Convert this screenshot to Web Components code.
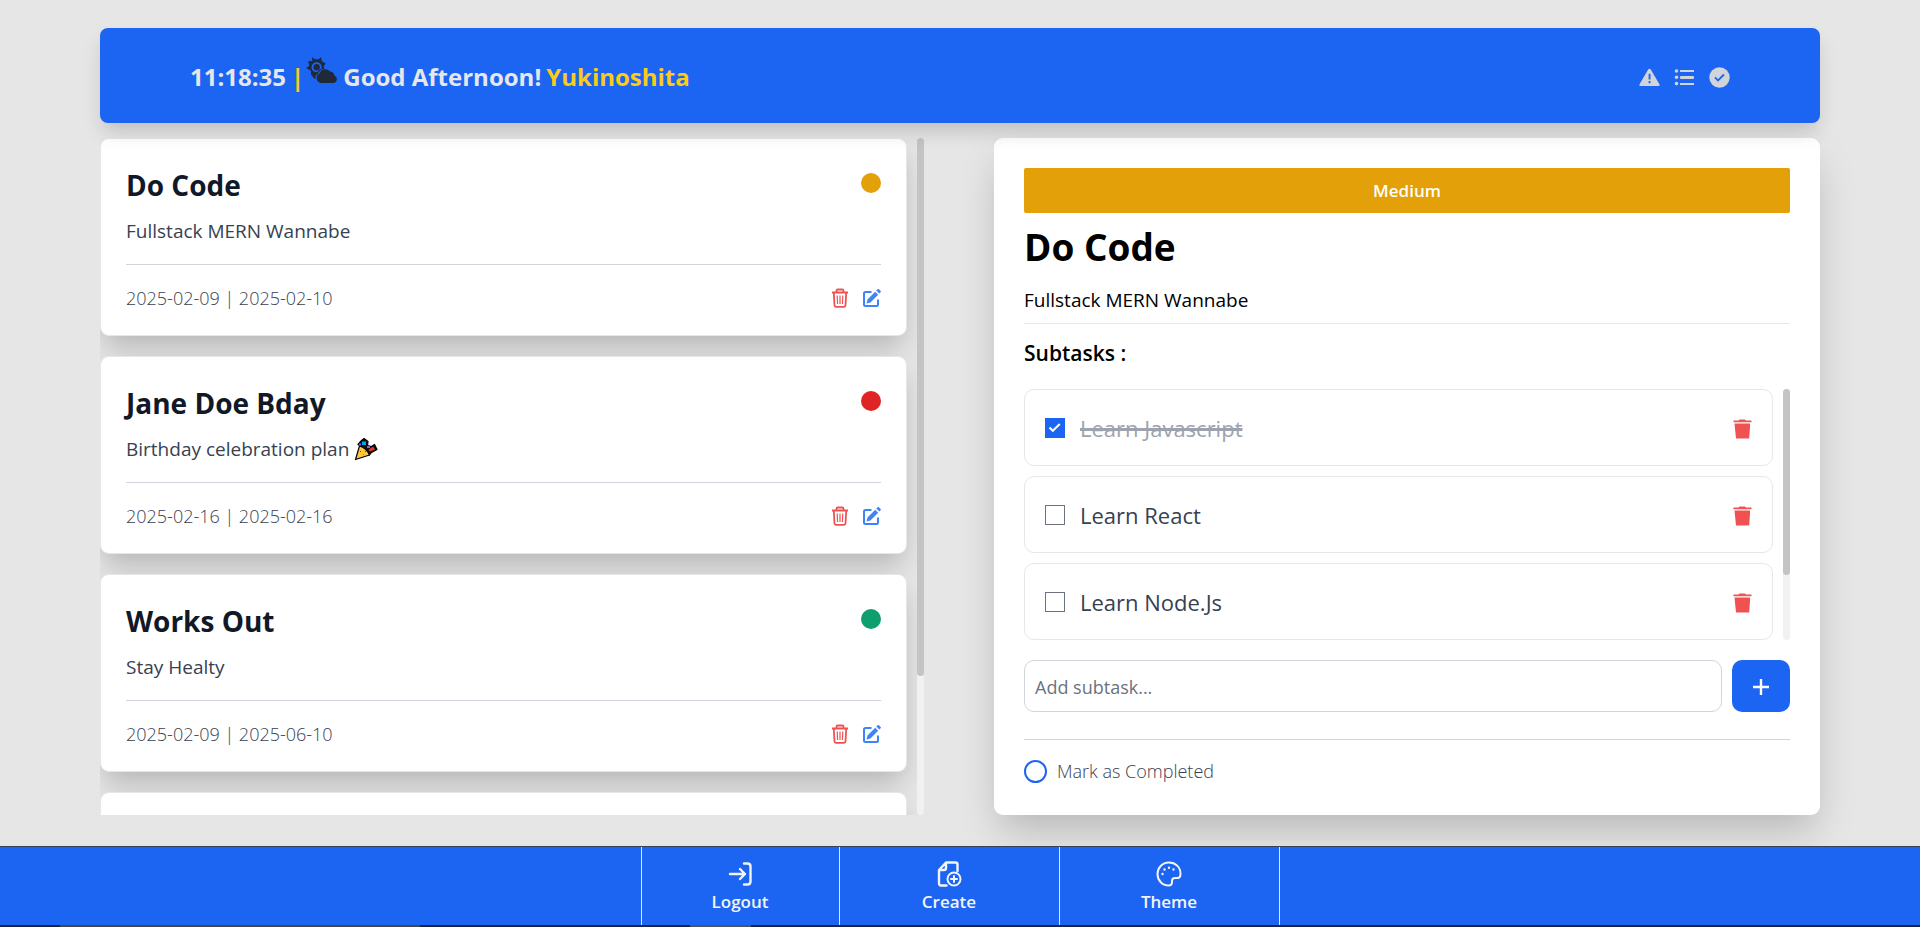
<!DOCTYPE html>
<html lang="en">
<head>
<meta charset="utf-8">
<title>Todo</title>
<style>
  body { margin: 0; background: #e6e6e6; font-family: "Open Sans", "Noto Sans", sans-serif; }
</style>
</head>
<body>
<todo-app></todo-app>

<template id="t-app">
  <style>
    :host { display: flex; flex-direction: column; min-height: 100vh; }
    main { flex: 1; display: grid; grid-template-columns: 824fr 826fr; gap: 70px; margin: 15px 100px 31px; }
    top-bar { margin: 28px 100px 0; }
  </style>
  <top-bar time="11:18:35" greeting="Good Afternoon!" user="Yukinoshita"></top-bar>
  <main>
    <task-list>
      <task-card color="#e3a008">
        <span slot="title">Do Code</span>
        <span slot="desc">Fullstack MERN Wannabe</span>
        <span slot="dates">2025-02-09 | 2025-02-10</span>
      </task-card>
      <task-card color="#e02424">
        <span slot="title">Jane Doe Bday</span>
        <span slot="desc">Birthday celebration plan</span>
        <party-icon slot="desc"></party-icon>
        <span slot="dates">2025-02-16 | 2025-02-16</span>
      </task-card>
      <task-card color="#0e9f6e">
        <span slot="title">Works Out</span>
        <span slot="desc">Stay Healty</span>
        <span slot="dates">2025-02-09 | 2025-06-10</span>
      </task-card>
      <task-card color="#e3a008"></task-card>
    </task-list>
    <task-detail></task-detail>
  </main>
  <bottom-nav></bottom-nav>
</template>

<template id="t-top">
  <style>
    :host { display: flex; align-items: center; justify-content: space-between; height: 95px; box-sizing: border-box;
      padding: 2px 90px 0; background: #1c64f2; border-radius: 8px; position: relative; z-index: 1;
      box-shadow: 0 11px 20px -3px rgba(0,0,0,.17); }
    h1 { margin: 0; display: flex; align-items: center; font-size: 24px; line-height: 32px; font-weight: 700; color: #e5e7eb; }
    .bar, .user { color: #facc15; }
    .bar { margin: 0 2px 0 5px; }
    .sky { margin: 0 5px 14px 0; width: 32px; height: 26px; }
    .user { margin-left: 5px; }
    nav { display: flex; gap: 14px; }
    button { border: 0; background: none; padding: 0; width: 21px; height: 22px; color: #d1d5db; }
    svg { display: block; }
  </style>
  <h1><span class="time"></span><span class="bar">|</span>
    <svg class="sky" viewBox="0 0 32 26" fill="#1f2937" aria-hidden="true">
      <path fill-rule="evenodd" d="M6 0l2.600 2.300h4L15.200 0l.5 4.200 4 2.200-2 2.900.7 2.400a8 8 0 0 0-6.500 5.400l-2 1.100-.8 4.300-3-3.400L5 17.300 5 13.700 0 11l3.300-2.100L2.300 4l4 .3zM10.500 5.200a5 5 0 1 0 0 10l1 -.2a8 8 0 0 1 4-3.600l.2-1.200a5 5 0 0 0-5.200-5zM10.700 7.100a3.200 3.200 0 1 1 0 6.400a3.200 3.200 0 0 1 0-6.400z"/>
      <path d="M15 26a5 5 0 0 1-1.500-9.500A6 6 0 0 1 24 14.500a5 5 0 0 1 4.500 4A4 4 0 0 1 28 26z"/>
    </svg>
    <span class="greet"></span><span class="user"></span></h1>
  <nav>
    <button aria-label="Overdue"><svg width="21" height="22" viewBox="0 0 21 22"><path fill="currentColor" fill-rule="evenodd" d="M9.300 3.200q1.200-1 2.300 0l9 15.200q.3 1.600-1.200 1.600H1.500Q0 20 .4 18.400zM9.600 7.800v5.700h1.900V7.800zM9.600 15v2.200h1.900V15z"/></svg></button>
    <button aria-label="List"><svg width="21" height="22" viewBox="0 0 21 22" fill="currentColor"><circle cx="2.500" cy="5" r="1.800"/><circle cx="2.500" cy="11.300" r="1.800"/><circle cx="2.500" cy="17.600" r="1.800"/><rect x="6" y="4" width="14" height="2"/><rect x="6" y="10" width="14" height="3" rx="1"/><rect x="6" y="17" width="14" height="2"/></svg></button>
    <button aria-label="Completed"><svg width="21" height="22" viewBox="0 0 21 22"><circle cx="10.500" cy="11.500" r="10.200" fill="currentColor"/><path d="M6 11.300l3 3.200 6-6" fill="none" stroke="#1c64f2" stroke-width="1.800"/></svg></button>
  </nav>
</template>

<template id="t-scroll">
  <style>
    :host { display: block; width: 7px; border-radius: 4px; background: #f1f1f1; }
    div { border-radius: 4px; background: #c4c4c4; height: var(--thumb); }
  </style>
  <div></div>
</template>

<template id="t-list">
  <style>
    :host { display: flex; gap: 10px; contain: size; overflow: hidden; }
    section { flex: 1; display: flex; flex-direction: column; gap: 20px; }
    scroll-bar { --thumb: 79.4%; }
  </style>
  <section aria-label="Tasks"><slot></slot></section>
  <scroll-bar></scroll-bar>
</template>

<template id="t-card">
  <style>
    :host { display: block; flex: none; box-sizing: border-box; height: 198px; padding: 25px; background: #fff; border: 1px solid #e5e7eb;
      border-radius: 9px; box-shadow: 0 14px 28px -4px rgba(0,0,0,.22); }
    header, footer { display: flex; justify-content: space-between; }
    h2 { margin: 0; font-size: 28px; line-height: 42px; font-weight: 700; color: #111827; }
    .dot { width: 20px; height: 20px; border-radius: 50%; margin-top: 9px; background: var(--priority); }
    .desc { margin: 10px 0 18px; display: flex; gap: 5px; align-items: center; height: 30px; font-size: 19px; line-height: 30px; color: #374151; }
    footer { border-top: 1px solid #d1d5db; padding-top: 20px; align-items: center; }
    .dates { font-size: 18px; line-height: 26px; font-weight: 300; color: #374151; }
    .tools { display: flex; gap: 14px; }
    button { border: 0; background: none; padding: 0; width: 18px; height: 20px; }
    svg { display: block; }
  </style>
  <header><h2><slot name="title"></slot></h2><span class="dot"></span></header>
  <div class="desc"><slot name="desc"></slot></div>
  <footer>
    <span class="dates"><slot name="dates"></slot></span>
    <span class="tools">
      <button aria-label="Delete"><svg width="18" height="20" viewBox="0 0 18 20" fill="none" stroke="#f05252"><path stroke-width="1.800" d="M1 4.500h16M5.500 4V2.800q0-1.300 1.300-1.300h4.400q1.300 0 1.300 1.300V4M2.800 5l.7 12.500q.1 1.300 1.400 1.300h8.200q1.300 0 1.400-1.300L15.200 5"/><path stroke-width="1.200" d="M6.200 7.500l.4 8.500M9 7.500V16M11.800 7.500l-.4 8.500"/></svg></button>
      <button aria-label="Edit"><svg width="18" height="20" viewBox="0 0 18 20" fill="none" stroke="#3f83f8"><path stroke-width="2" d="M8.500 4H2.500Q1 4 1 5.500V16.500Q1 18 2.500 18H13.500Q15 18 15 16.500V11.500"/><path fill="#3f83f8" stroke="none" d="M12.200 3.700l3 3-7.800 7.800-3.900 1 1-3.900zM13.300 2.600l1.300-1.300q.7-.7 1.400 0l1.600 1.600q.7.700 0 1.400l-1.300 1.300z"/></svg></button>
    </span>
  </footer>
</template>

<template id="t-party">
  <style>:host { display: block; width: 24px; height: 24px; } svg { display: block; }</style>
  <svg width="24" height="24" viewBox="0 0 24 24" role="img" aria-label="Party popper" stroke="#000" stroke-width="1.200" stroke-linejoin="round">
    <path fill="#111" d="M4 7.500l3-3.500 3-2.500 4 3-.5 4 4 1 3-2 2.500 5-5.500 3-2 2.500-3-4.500-4-3z"/>
    <path fill="#ffc83d" d="M1.500 22.500L5.500 9Q12.500 11 15.500 18z"/>
    <path stroke="none" fill="#00a6ed" d="M8 4.500h4v3.500H8z"/><path stroke="none" fill="#f92f20" d="M14.500 13l4.500-3.500 2 3-5 2z"/><path stroke="none" fill="#8b5cf6" d="M5 6.500h2v2H5zM13 9h3v2h-3z"/>
    <path stroke="none" fill="#ca0b4a" d="M6 14h1v1H6zM11 14h1v1h-1z"/><path stroke="none" fill="#00d26a" d="M9 17h1v1H9z"/>
  </svg>
</template>

<template id="t-detail">
  <style>
    :host { display: block; box-sizing: border-box; padding: 30px 30px 32px; background: #fff; border-radius: 9px;
      box-shadow: 0 20px 40px -6px rgba(0,0,0,.21); }
    .badge { height: 45px; display: grid; place-items: center; background: #e3a008; border-radius: 2px; color: #fff; font-size: 17px; font-weight: 600; }
    h2 { margin: 6px 0 10px; font-size: 37px; line-height: 56px; font-weight: 700; }
    p { margin: 0; padding-bottom: 8px; border-bottom: 1px solid #e5e7eb; font-size: 19px; line-height: 30px; }
    h3 { margin: 14px 0 21px; font-size: 21px; line-height: 30px; font-weight: 600; }
    .subs { display: flex; gap: 10px; }
    .items { flex: 1; display: flex; flex-direction: column; gap: 10px; }
    scroll-bar { --thumb: 74.1%; }
    form { display: flex; gap: 10px; margin: 20px 0 27px; }
    input[type=text] { flex: 1; min-width: 0; box-sizing: border-box; height: 52px; padding: 2px 10px 0; border: 1px solid #d1d5db; border-radius: 10px; font: 400 18px "Open Sans", sans-serif; outline: 0; }
    input::placeholder { color: #6b7280; opacity: 1; }
    form button { width: 58px; height: 52px; border: 0; border-radius: 10px; background: #1c64f2; padding: 2px 0 0; display: grid; place-items: center; }
    .done { display: flex; align-items: center; gap: 10px; border-top: 1px solid #d1d5db; padding-top: 19px; font-size: 18px; line-height: 24px; font-weight: 300; color: #374151; }
    .done input { appearance: none; margin: 0; width: 23px; height: 23px; box-sizing: border-box; border: 2px solid #1c64f2; border-radius: 50%; }
  </style>
  <div class="badge">Medium</div>
  <h2>Do Code</h2>
  <p>Fullstack MERN Wannabe</p>
  <h3>Subtasks :</h3>
  <div class="subs">
    <div class="items">
      <sub-task done>Learn Javascript</sub-task>
      <sub-task>Learn React</sub-task>
      <sub-task>Learn Node.Js</sub-task>
    </div>
    <scroll-bar></scroll-bar>
  </div>
  <form>
    <input type="text" placeholder="Add subtask..." aria-label="Add subtask">
    <button type="button" aria-label="Add"><svg width="18" height="18" viewBox="0 0 18 18" stroke="#fff" stroke-width="2.400"><path d="M9 1v16M1 9h16"/></svg></button>
  </form>
  <label class="done"><input type="checkbox">Mark as Completed</label>
</template>

<template id="t-sub">
  <style>
    :host { display: flex; align-items: center; justify-content: space-between; box-sizing: border-box; height: 77px;
      padding: 0 20px; border: 1px solid #e5e7eb; border-radius: 10px; }
    label { display: flex; align-items: center; gap: 15px; font-size: 22px; line-height: 30px; color: #374151; }
    input { appearance: none; margin: 0; width: 20px; height: 20px; border: 1px solid #6b7280; box-sizing: border-box; }
    input:checked { border: 0; background: #1c64f2 url("data:image/svg+xml,%3Csvg xmlns='http://www.w3.org/2000/svg' viewBox='0 0 20 20'%3E%3Cpath d='M4.500 9.500l3.300 3.300 7-6.800' fill='none' stroke='%23fff' stroke-width='2'/%3E%3C/svg%3E"); }
    :host([done]) label { color: #9ca3af; text-decoration: line-through 3px; }
    button { border: 0; background: none; padding: 2px 0 0; }
    svg { display: block; }
  </style>
  <label><input type="checkbox"><span><slot></slot></span></label>
  <button aria-label="Delete subtask"><svg width="19" height="20" viewBox="0 0 19 20" fill="#f05252"><path d="M.5 1.500h5L6.500.5h5.500l1 1h5.500V3.200H.5zM1.500 4.500h15.500V8l-.8 11.500H3z"/></svg></button>
</template>

<template id="t-nav">
  <style>
    :host { display: block; background: #1c64f2; border-top: 1px solid #374151; }
    nav { display: flex; justify-content: center; height: 78px; }
    button { box-sizing: border-box; width: 220px; border: 0; border-right: 1px solid #e5e7eb; background: none; padding: 2px 0 0; font: 600 17px/24px "Open Sans", sans-serif;
      color: #f3f4f6; display: flex; flex-direction: column; align-items: center; justify-content: center; gap: 3px; }
    button:first-child { width: 199px; border-left: 1px solid #e5e7eb; }
    svg { width: 26px; height: 26px; fill: none; stroke: #f3f4f6; stroke-width: 2; stroke-linecap: round; stroke-linejoin: round; }
    .edge { height: 2px; background: linear-gradient(90deg, #1a2540 60px, #4a4640 60px 420px, #1a2540 420px 690px, #4b5563 690px 751px, #1a2540 751px); }
  </style>
  <nav>
    <button><svg viewBox="0 0 26 26"><path stroke-width="2.400" d="M3 13h15M13 8l5 5-5 5M17 2.500h3.500q3 0 3 3v15q0 3-3 3H17"/></svg>Logout</button>
    <button><svg viewBox="0 0 26 26"><path stroke-width="2.400" d="M10.500 24.500H5q-2 0-2-2V9l7-7.500h9.500q2 0 2 2V10M3.500 9h4.500q2 0 2-2V2"/><circle cx="18" cy="18" r="6.500"/><path d="M18 15v6M15 18h6"/></svg>Create</button>
    <button><svg viewBox="0 0 26 26"><path d="M13 1.500C6 1.500 1.500 7 1.500 13S6 24.500 12.500 24.500q3.500 0 3.500-3.500v-1q0-3 3-3h2.500q3 0 3-4C24.500 6 19.500 1.500 13 1.500z"/><path stroke-width="2.400" d="M6.500 13v0M8.500 8.500v0M13 6.700v0M17.500 8.500v0"/></svg>Theme</button>
  </nav>
  <div class="edge"></div>
</template>

<script>
  class Base extends HTMLElement {
    constructor() {
      super();
      this.attachShadow({ mode: "open" }).append(document.getElementById(this.constructor.tpl).content.cloneNode(true));
    }
    $(sel) { return this.shadowRoot.querySelector(sel); }
  }
  customElements.define("scroll-bar", class extends Base { static tpl = "t-scroll"; });
  customElements.define("party-icon", class extends Base { static tpl = "t-party"; });
  customElements.define("top-bar", class extends Base {
    static tpl = "t-top";
    connectedCallback() {
      this.$(".time").textContent = this.getAttribute("time");
      this.$(".greet").textContent = this.getAttribute("greeting");
      this.$(".user").textContent = this.getAttribute("user");
    }
  });
  customElements.define("task-card", class extends Base {
    static tpl = "t-card";
    connectedCallback() { this.style.setProperty("--priority", this.getAttribute("color")); }
  });
  customElements.define("task-list", class extends Base { static tpl = "t-list"; });
  customElements.define("sub-task", class extends Base {
    static tpl = "t-sub";
    connectedCallback() {
      const box = this.$("input");
      box.checked = this.hasAttribute("done");
      box.addEventListener("change", () => this.toggleAttribute("done", box.checked));
    }
  });
  customElements.define("task-detail", class extends Base { static tpl = "t-detail"; });
  customElements.define("bottom-nav", class extends Base { static tpl = "t-nav"; });
  customElements.define("todo-app", class extends Base { static tpl = "t-app"; });
</script>
</body>
</html>
